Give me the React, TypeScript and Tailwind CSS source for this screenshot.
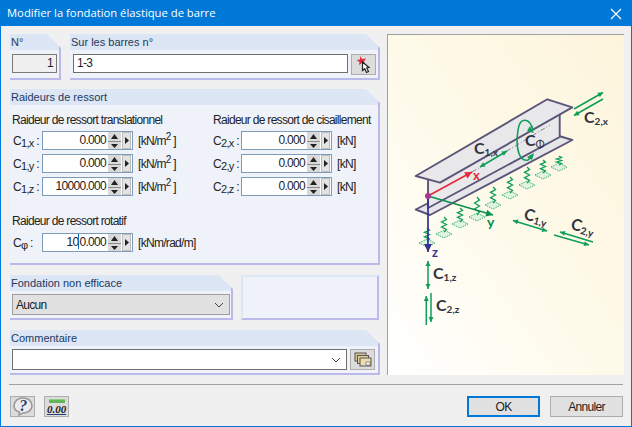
import React from "react";

const GREEN = "#0f9d58";

function Group({
  title,
  className,
  children,
}: {
  title: string;
  className: string;
  children: React.ReactNode;
}) {
  return (
    <div
      className={`bg-[#eff3f9] border-r-2 border-b-2 border-[#b9b9ea] [clip-path:polygon(0_0,calc(100%-14px)_0,100%_14px,100%_100%,0_100%)] ${className}`}
    >
      <div className="h-[16px] bg-[#dce6f5] pl-[1px] text-[11px] tracking-normal leading-[16px] text-[#1b3a5f]">
        {title}
      </div>
      {children}
    </div>
  );
}

function Spinner({ value, caret }: { value: string; caret?: boolean }) {
  return (
    <div className="flex items-center h-[19px] w-[91px] shrink-0 bg-white border border-[#7d9cba] pr-[1px]">
      <div className="flex-1 text-right pr-[2px] leading-[17px] text-[#222]">
        {caret ? (
          <>
            10
            <span className="inline-block w-[1px] h-[15px] align-[-3px] bg-[#0a6fc2]" />
            0.000
          </>
        ) : (
          value
        )}
      </div>
      <div className="w-[13px] h-[17px] bg-[#d9d9d9] flex flex-col items-center justify-center gap-[1px]">
        <svg width="9" height="7" viewBox="0 0 9 7">
          <path d="M4.5 1 L8 6 H1 Z" fill="#222" />
        </svg>
        <div className="w-[13px] h-[1px] bg-[#8a8a8a]" />
        <svg width="9" height="6" viewBox="0 0 9 6">
          <path d="M1 1 H8 L4.5 5 Z" fill="#222" />
        </svg>
      </div>
      <div className="w-[9px] h-[17px] ml-[1px] bg-[#e3e3e3] border border-[#bdbdbd] flex items-center justify-center">
        <svg width="4" height="7" viewBox="0 0 4 7">
          <path d="M0 0 L4 3.5 L0 7 Z" fill="#222" />
        </svg>
      </div>
    </div>
  );
}

function Row({
  name,
  sub,
  value,
  unit,
  labelWidth,
  caret,
}: {
  name: string;
  sub: string;
  value: string;
  unit: React.ReactNode;
  labelWidth: string;
  caret?: boolean;
}) {
  return (
    <div className="flex items-center h-[19px]">
      <div className={`${labelWidth} shrink-0 text-[#222] whitespace-nowrap`}>
        {name}
        <sub className="text-[11px]">{sub}</sub> :
      </div>
      <Spinner value={value} caret={caret} />
      <div className="ml-[5px] text-[#222] whitespace-nowrap">{unit}</div>
    </div>
  );
}

const kNm2 = (
  <>
    [kN/m<sup className="text-[10px]">2</sup> ]
  </>
);

function ToolButton({ className, children }: { className: string; children: React.ReactNode }) {
  return (
    <div className={`flex items-center justify-center bg-[#dcdcdc] border border-[#adadad] ${className}`}>
      {children}
    </div>
  );
}

function PickIcon() {
  return (
    <svg width="18" height="18" viewBox="0 0 18 18">
      <path d="M5 0 L7 3 L11 2.5 L9 5.5 L10 8 L7 7 L4 9 L4.5 6 L1.5 4 L5 3.5 Z" fill="#e0283c" />
      <path d="M7.5 6 L7.5 14.5 L9.7 12.8 L11.5 16.5 L13.5 15.5 L11.7 12 L14 11.5 Z" fill="#fff" stroke="#222" strokeWidth="1.2" />
    </svg>
  );
}

function WindowsIcon() {
  return (
    <svg width="18" height="16" viewBox="0 0 18 16">
      <rect x="1" y="1" width="11" height="8" fill="#d8c68e" stroke="#555" />
      <rect x="3.5" y="3.5" width="11" height="8" fill="#e0cf9c" stroke="#555" />
      <rect x="6" y="6" width="11" height="8" fill="#ecdcae" stroke="#555" />
      <rect x="12" y="10" width="4" height="3" fill="#fff" stroke="#666" strokeWidth="0.7" />
    </svg>
  );
}

function HelpIcon() {
  return (
    <svg width="20" height="19" viewBox="0 0 20 19">
      <path d="M10 1 C15 1 19 4 19 9 C19 13 15 16 10 16 L6 18 L6.5 15 C3 14 1 12 1 9 C1 4 5 1 10 1 Z" fill="#ececec" stroke="#9a9a9a" strokeWidth="1.6" />
      <text x="10" y="14" textAnchor="middle" fontFamily="'Liberation Serif', serif" fontStyle="italic" fontWeight="700" fontSize="16" fill="#27406f">
        ?
      </text>
    </svg>
  );
}

function ZeroIcon() {
  return (
    <div className="flex flex-col items-center">
      <div className="w-[16px] h-[4px] bg-[#62b558] border-t border-[#8fcf7f]" />
      <div className="font-['Liberation_Serif',serif] italic font-bold text-[11px] tracking-normal leading-[12px] text-[#222] underline decoration-[#27406f]">
        0.00
      </div>
    </div>
  );
}

function Arrow({
  x1,
  y1,
  x2,
  y2,
  both,
  color = GREEN,
  width = 1.5,
  head = 5,
}: {
  x1: number;
  y1: number;
  x2: number;
  y2: number;
  both?: boolean;
  color?: string;
  width?: number;
  head?: number;
}) {
  const tip = (ax: number, ay: number, bx: number, by: number) => {
    const a = Math.atan2(by - ay, bx - ax);
    const s = head * 0.5;
    const cx = bx - Math.cos(a) * head;
    const cy = by - Math.sin(a) * head;
    const p = [
      [bx, by],
      [cx - Math.sin(a) * s, cy + Math.cos(a) * s],
      [cx + Math.sin(a) * s, cy - Math.cos(a) * s],
    ];
    return p.map((q) => q.join(",")).join(" ");
  };
  return (
    <g>
      <line x1={x1} y1={y1} x2={x2} y2={y2} stroke={color} strokeWidth={width} />
      <polygon points={tip(x1, y1, x2, y2)} fill={color} />
      {both && <polygon points={tip(x2, y2, x1, y1)} fill={color} />}
    </g>
  );
}

const springs = [
  [559, 156, 165],
  [543, 160, 173],
  [527, 167, 183],
  [510, 177, 193],
  [493, 187, 203],
  [477, 197, 215],
  [460, 208, 222],
  [444, 217, 232],
  [427, 228, 241],
];

function Spring({ x, y1, y2 }: { x: number; y1: number; y2: number }) {
  const pts: string[] = [`${x},${y1}`];
  const n = 6;
  for (let i = 1; i < n; i++) {
    const y = y1 + ((y2 - y1) * i) / n;
    pts.push(`${x + (i % 2 ? 2.5 : -2.5)},${y}`);
  }
  pts.push(`${x},${y2}`);
  return (
    <g>
      <polygon
        points={`${x - 8},${y2 + 2} ${x},${y2 - 2} ${x + 8},${y2 + 2} ${x},${y2 + 6}`}
        fill="#dff3e0"
        stroke={GREEN}
        strokeWidth="0.8"
        strokeDasharray="1.5 1"
      />
      <polyline points={pts.join(" ")} fill="none" stroke={GREEN} strokeWidth="1.3" />
    </g>
  );
}

function Sym({
  x,
  y,
  sub,
  rotate,
}: {
  x: number;
  y: number;
  sub: string;
  rotate?: number;
}) {
  return (
    <text
      x={x}
      y={y}
      transform={rotate ? `rotate(${rotate} ${x} ${y})` : undefined}
      fontFamily="Lato, sans-serif"
      fontWeight="700"
      fontSize="16"
      fill="#33333d"
    >
      C
      <tspan fontSize="10" dy="2">
        {sub}
      </tspan>
    </text>
  );
}

function BeamDrawing() {
  return (
    <svg width="236" height="340" viewBox="388 35 236 340" className="tracking-normal">
      {/* lower flange */}
      <polygon points="415.7,209.5 559,136 572.3,140 430,215" fill="#e6e6ea" stroke="#5b5678" strokeWidth="1.9" strokeLinejoin="round" />
      {/* web */}
      <polygon points="428,178 559.7,108 559.7,137 428,208" fill="#e9e9ec" stroke="#5b5678" strokeWidth="1.9" />
      {/* upper flange */}
      <polygon points="415.7,176 547.3,99.3 572.3,107.3 440,182.7" fill="#e8e8eb" stroke="#5b5678" strokeWidth="1.9" strokeLinejoin="round" />
      <line x1="472" y1="172" x2="550" y2="125" stroke="#55556a" strokeWidth="0.7" strokeDasharray="5 2 1 2" />

      {springs.map(([x, y1, y2]) => (
        <Spring key={x} x={x} y1={y1} y2={y2} />
      ))}

      {/* local axes */}
      <Arrow x1={428} y1={196} x2={472} y2={172} color="#e8283c" width={1.6} head={7} />
      <Arrow x1={428} y1={196} x2={493} y2={215} color="#0c8f4c" width={1.6} head={7} />
      <Arrow x1={428} y1={196} x2={428} y2={252} color="#33308f" width={1.7} head={8} />
      <circle cx="428" cy="196" r="3" fill="#a83a8c" />
      <text x="473" y="180" fontFamily="Lato, sans-serif" fontWeight="700" fontSize="13" fill="#e8283c">x</text>
      <text x="487" y="227" fontFamily="Lato, sans-serif" fontWeight="700" fontSize="14" fill="#0c8f4c">y</text>
      <text x="432" y="257" fontFamily="Lato, sans-serif" fontWeight="700" fontSize="13" fill="#33308f">z</text>

      <Arrow x1={480} y1={167} x2={507} y2={151} both />
      <path d="M533 130 C 530 118 520 116 518 130 C 515 150 520 162 528 160 L 533 155" fill="none" stroke={GREEN} strokeWidth="1.6" />
      <polygon points="534,153 527,157 532,160" fill={GREEN} />
      <polygon points="534,133 530,126 527,131" fill={GREEN} />

      <Arrow x1={574} y1={109} x2={603} y2={92.5} />
      <Arrow x1={603} y1={99} x2={574} y2={115.5} />
      <Arrow x1={513} y1={220.5} x2={547} y2={231} both />
      <Arrow x1={593} y1={242} x2={560} y2={232} />
      <Arrow x1={554} y1={235} x2={589} y2={245} />
      <Arrow x1={428} y1={261} x2={428} y2={289} both />
      <Arrow x1={426.3} y1={325} x2={426.3} y2={296} />
      <Arrow x1={431} y1={293} x2={431} y2={322} />

      <Sym x={474} y={154} sub="1,x" />
      <text x="525" y="146" fontFamily="Lato, sans-serif" fontWeight="700" fontSize="16" fill="#33333d">
        C<tspan fontSize="11" fontWeight="400" dy="2">Φ</tspan>
      </text>
      <Sym x={584} y={123} sub="2,x" />
      <Sym x={523} y={219} sub="1,y" rotate={15} />
      <Sym x={570} y={229} sub="2,y" rotate={15} />
      <Sym x={433} y={279} sub="1,z" />
      <Sym x={436} y={311} sub="2,z" />
    </svg>
  );
}

export default function App() {
  return (
    <div className="w-[632px] h-[427px] overflow-hidden flex flex-col bg-[#f0f0f0] border border-[#0078d7] font-['Liberation_Sans',Arial,sans-serif] text-[12px] tracking-[-0.7px] text-[#222]">
      <div className="h-[25px] shrink-0 bg-[#0078d7] flex items-center justify-between pl-[6px] pr-[9px] text-white text-[11.25px] tracking-normal font-['Open_Sans',sans-serif]">
        <span>Modifier la fondation élastique de barre</span>
        <svg width="12" height="12" viewBox="0 0 12 12">
          <path d="M1 1 L11 11 M11 1 L1 11" stroke="#fff" strokeWidth="1.2" />
        </svg>
      </div>

      <div className="flex pl-[9px] pt-[8px]">
        {/* left column */}
        <div className="w-[370px] flex flex-col">
          <div className="flex gap-[9px]">
            <Group title="N°" className="w-[51px] h-[46px]">
              <div className="mt-[4px] ml-[2px] w-[45px] h-[19px] bg-[#f0f0f0] border border-[#7a7a7a] text-right pr-[3px] leading-[17px]">
                1
              </div>
            </Group>
            <Group title="Sur les barres n°" className="w-[310px] h-[46px]">
              <div className="mt-[4px] ml-[3px] flex gap-[3px]">
                <div className="w-[275px] h-[19px] bg-white border border-[#6f6f6f] pl-[3px] leading-[17px]">
                  1-3
                </div>
                <ToolButton className="w-[25px] h-[21px]">
                  <PickIcon />
                </ToolButton>
              </div>
            </Group>
          </div>

          <Group title="Raideurs de ressort" className="mt-[9px] w-[370px] h-[176px]">
            <div className="pl-[2px] pt-[8px]">
              <div className="flex">
                <div className="w-[201px] shrink-0 flex flex-col gap-[4px]">
                  <div className="h-[14px] leading-[14px]">Raideur de ressort translationnel</div>
                  <Row name="C" sub="1,x" value="0.000" unit={kNm2} labelWidth="w-[30px] pl-[1px]" />
                  <Row name="C" sub="1,y" value="0.000" unit={kNm2} labelWidth="w-[30px] pl-[1px]" />
                  <Row name="C" sub="1,z" value="10000.000" unit={kNm2} labelWidth="w-[30px] pl-[1px]" />
                </div>
                <div className="flex flex-col gap-[4px]">
                  <div className="h-[14px] leading-[14px] whitespace-nowrap">Raideur de ressort de cisaillement</div>
                  <Row name="C" sub="2,x" value="0.000" unit="[kN]" labelWidth="w-[28px]" />
                  <Row name="C" sub="2,y" value="0.000" unit="[kN]" labelWidth="w-[28px]" />
                  <Row name="C" sub="2,z" value="0.000" unit="[kN]" labelWidth="w-[28px]" />
                </div>
              </div>
              <div className="mt-[18px] h-[14px] leading-[14px]">Raideur de ressort rotatif</div>
              <div className="mt-[5px]">
                <Row name="C" sub="φ" value="100.000" unit="[kNm/rad/m]" labelWidth="w-[30px] pl-[1px]" caret />
              </div>
            </div>
          </Group>

          <div className="mt-[10px] flex gap-[8px]">
            <Group title="Fondation non efficace" className="w-[223px] h-[45px]">
              <div className="mt-[3px] ml-[2px] w-[218px] h-[21px] bg-[#e1e1e1] border border-[#9f9f9f] flex items-center justify-between pl-[3px] pr-[5px]">
                <span>Aucun</span>
                <svg width="10" height="6" viewBox="0 0 10 6">
                  <path d="M1 1 L5 5 L9 1" fill="none" stroke="#444" />
                </svg>
              </div>
            </Group>
            <div className="w-[138px] h-[45px] bg-[#eff3f9] border-2 border-t-[#dce6f5] border-l-[#dce6f5] border-r-[#b9b9ea] border-b-[#b9b9ea]" />
          </div>

          <Group title="Commentaire" className="mt-[10px] w-[370px] h-[45px]">
            <div className="mt-[3px] ml-[2px] flex gap-[3px]">
              <div className="w-[335px] h-[21px] bg-white border border-[#6f6f6f] flex items-center justify-end pr-[5px]">
                <svg width="10" height="6" viewBox="0 0 10 6">
                  <path d="M1 1 L5 5 L9 1" fill="none" stroke="#444" />
                </svg>
              </div>
              <ToolButton className="w-[25px] h-[21px]">
                <WindowsIcon />
              </ToolButton>
            </div>
          </Group>
        </div>

        {/* picture */}
        <div className="ml-[7px] w-[237px] h-[341px] border-t border-l border-[#a0a0a0] bg-linear-to-bl from-[#fdf4dc] via-[#fefae9] to-white">
          <BeamDrawing />
        </div>
      </div>

      <div className="mt-[9px] ml-[8px] mr-[8px] h-[1px] bg-[#a0a0a0]" />

      <div className="flex items-center pl-[9px] pr-[8px] pt-[11px]">
        <ToolButton className="w-[25px] h-[21px]">
          <HelpIcon />
        </ToolButton>
        <ToolButton className="ml-[9px] w-[25px] h-[21px]">
          <ZeroIcon />
        </ToolButton>
        <div className="ml-auto w-[73px] h-[21px] bg-[#e1e1e1] border-2 border-[#0078d7] flex items-center justify-center">
          OK
        </div>
        <div className="ml-[10px] w-[73px] h-[21px] bg-[#e1e1e1] border border-[#adadad] flex items-center justify-center">
          Annuler
        </div>
      </div>
    </div>
  );
}
